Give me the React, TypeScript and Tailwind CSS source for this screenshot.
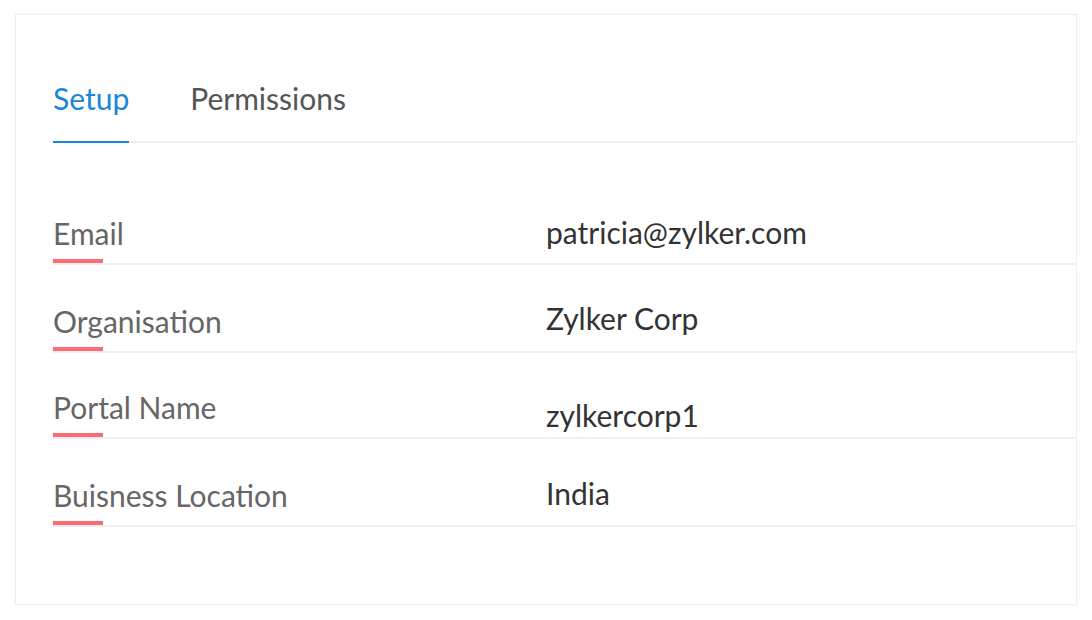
import React from "react";

const rows = [
  { label: "Email", value: "patricia@zylker.com", h: "h-[88px] mt-[34px]", pb: "pb-[15px]" },
  { label: "Organisation", value: "Zylker Corp", h: "h-[88px]", pb: "pb-[17px]" },
  { label: "Portal Name", value: "zylkercorp1", h: "h-[86px]", pb: "pb-[6px]" },
  { label: "Buisness Location", value: "India", h: "h-[88px]", pb: "pb-[16px]" },
];

export default function App() {
  return (
    <div
      className="w-[1092px] h-[620px] bg-white pt-[14px] pl-[15px]"
      style={{ fontFamily: "Lato, 'Liberation Sans', sans-serif" }}
    >
      <div className="w-[1062px] h-[591px] bg-white border border-[#efefef] shadow-[0_0_3px_rgba(0,0,0,0.04)] pl-[37px] pt-[67px]">
        <div className="flex gap-[61px] border-b-2 border-[#f0f0f0]">
          <div className="-mb-[2px] border-b-2 border-[#1a86d9] pb-[27px] text-[30px] leading-[32px] text-[#1a86d9]">
            Setup
          </div>
          <div className="pb-[27px] text-[30px] leading-[32px] text-[#555555]">
            Permissions
          </div>
        </div>
        {rows.map((r) => (
          <div key={r.label} className={`flex border-b-2 border-[#f0f0f0] ${r.h}`}>
            <div className="w-[493px] flex flex-col justify-end">
              <span className="text-[30px] leading-[32px] text-[#666666]">{r.label}</span>
              <div className="mt-[10px] h-[4px] w-[50px] bg-[#fd6a77]" />
            </div>
            <div className={`flex flex-col justify-end ${r.pb}`}>
              <span className="text-[30px] leading-[32px] text-[#333333]">{r.value}</span>
            </div>
          </div>
        ))}
      </div>
    </div>
  );
}
